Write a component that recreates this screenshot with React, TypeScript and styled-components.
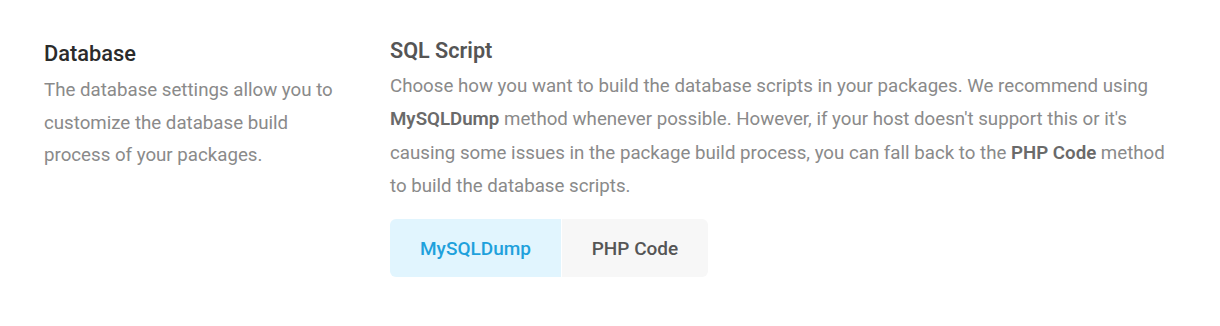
import React, { useState } from "react";
import styled, { createGlobalStyle } from "styled-components";

const GlobalStyle = createGlobalStyle`
  html, body {
    margin: 0;
    padding: 0;
    background: #ffffff;
  }
  body {
    font-family: Roboto, "Noto Sans", Arial, sans-serif;
    -webkit-font-smoothing: antialiased;
  }
`;

const Section = styled.section`
  display: grid;
  grid-template-columns: 300px 1fr;
  column-gap: 46px;
  padding: 36px 44px 0 44px;
`;

const Aside = styled.div`
  display: flex;
  flex-direction: column;
`;

const SideTitle = styled.h3`
  margin: 5px 0 7px 0;
  font-size: 21.8px;
  font-weight: 500;
  line-height: 26px;
  color: #2b2b2b;
`;

const SideText = styled.p`
  margin: 0;
  font-size: 18.7px;
  line-height: 32.5px;
  color: #8a8a8a;
`;

const Main = styled.div`
  display: flex;
  flex-direction: column;
`;

const FieldTitle = styled.h4`
  margin: 2px 0 6px 0;
  font-size: 21.6px;
  font-weight: 600;
  line-height: 26px;
  color: #555555;
`;

const FieldText = styled.p`
  margin: 0;
  font-size: 18.7px;
  line-height: 33.3px;
  color: #8a8a8a;

  strong {
    font-weight: 600;
    color: #6a6a6a;
  }
`;

const Toggle = styled.div`
  display: inline-flex;
  align-self: flex-start;
  gap: 1px;
  margin-top: 16px;
  border-radius: 6px;
  overflow: hidden;
`;

const Option = styled.button<{ $active: boolean; $width: number }>`
  width: ${(p) => p.$width}px;
  height: 58px;
  border: 0;
  padding: 0;
  font-family: inherit;
  font-size: 19px;
  font-weight: 500;
  cursor: pointer;
  background: ${(p) => (p.$active ? "#e1f5fe" : "#f7f7f7")};
  color: ${(p) => (p.$active ? "#1ea1dc" : "#555555")};
`;

const options = [
  { key: "mysqldump", label: "MySQLDump", width: 171 },
  { key: "php", label: "PHP Code", width: 146 },
];

export default function App() {
  const [method, setMethod] = useState("mysqldump");

  return (
    <>
      <GlobalStyle />
      <Section>
        <Aside>
          <SideTitle>Database</SideTitle>
          <SideText>
            The database settings allow you to customize the database build
            process of your packages.
          </SideText>
        </Aside>
        <Main>
          <FieldTitle>SQL Script</FieldTitle>
          <FieldText>
            Choose how you want to build the database scripts in your packages.
            We recommend using <strong>MySQLDump</strong> method whenever
            possible. However, if your host doesn't support this or it's
            causing some issues in the package build process, you can fall back
            to the <strong>PHP Code</strong> method to build the database
            scripts.
          </FieldText>
          <Toggle>
            {options.map((o) => (
              <Option
                key={o.key}
                $active={method === o.key}
                $width={o.width}
                onClick={() => setMethod(o.key)}
              >
                {o.label}
              </Option>
            ))}
          </Toggle>
        </Main>
      </Section>
    </>
  );
}
